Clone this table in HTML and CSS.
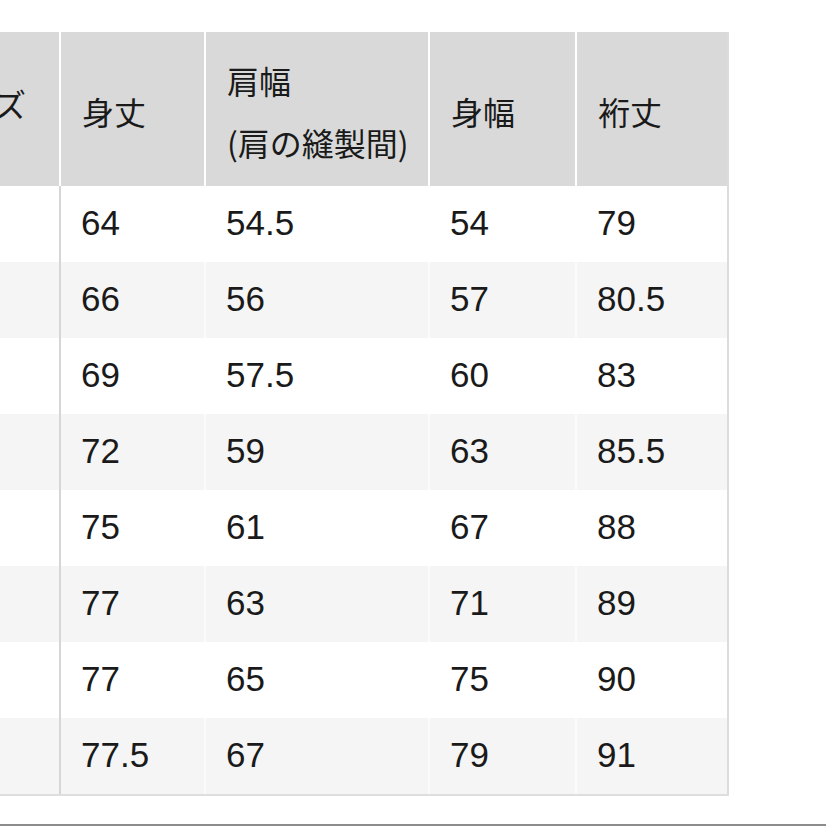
FILE: index.html
```html
<!DOCTYPE html>
<html lang="ja">
<head>
<meta charset="utf-8">
<title>サイズ表</title>
<link rel="stylesheet" href="styles.css">
</head>
<body>
<div class="page">
  <div class="table-clip">
    <table class="size-table">
      <colgroup>
        <col class="c-size">
        <col class="c-len">
        <col class="c-shoulder">
        <col class="c-width">
        <col class="c-sleeve">
      </colgroup>
      <thead>
        <tr>
          <th class="first">サイズ</th>
          <th>身丈</th>
          <th>肩幅<br>(肩の縫製間)</th>
          <th>身幅</th>
          <th class="last">裄丈</th>
        </tr>
      </thead>
      <tbody>
        <tr><td class="first"></td><td>64</td><td>54.5</td><td>54</td><td class="last">79</td></tr>
        <tr><td class="first"></td><td>66</td><td>56</td><td>57</td><td class="last">80.5</td></tr>
        <tr><td class="first"></td><td>69</td><td>57.5</td><td>60</td><td class="last">83</td></tr>
        <tr><td class="first"></td><td>72</td><td>59</td><td>63</td><td class="last">85.5</td></tr>
        <tr><td class="first"></td><td>75</td><td>61</td><td>67</td><td class="last">88</td></tr>
        <tr><td class="first"></td><td>77</td><td>63</td><td>71</td><td class="last">89</td></tr>
        <tr><td class="first"></td><td>77</td><td>65</td><td>75</td><td class="last">90</td></tr>
        <tr><td class="first"></td><td>77.5</td><td>67</td><td>79</td><td class="last">91</td></tr>
      </tbody>
    </table>
  </div>
  <div class="bottom-rule"></div>
</div>
</body>
</html>
```

FILE: styles.css
```css
html, body {
  margin: 0;
  padding: 0;
  background: #ffffff;
}

.page {
  width: 826px;
  height: 826px;
  overflow: hidden;
  display: flex;
  flex-direction: column;
  font-family: "Liberation Sans", "Noto Sans CJK JP", sans-serif;
  color: #1a1a1a;
}

.table-clip {
  padding-top: 32px;
}

.size-table {
  margin-left: -90px;
  border-collapse: separate;
  border-spacing: 0;
  table-layout: fixed;
  width: 819px;
  border-bottom: 2px solid #dedede;
}

.c-size { width: 151px; }
.c-len { width: 145px; }
.c-shoulder { width: 224px; }
.c-width { width: 147px; }
.c-sleeve { width: 152px; }

.size-table th {
  height: 154px;
  box-sizing: border-box;
  padding: 4px 0 0 21px;
  background: #d9d9d9;
  border-right: 2px solid #ffffff;
  text-align: left;
  vertical-align: middle;
  font-family: "Noto Sans CJK JP", sans-serif;
  font-weight: 400;
  font-size: 32px;
  line-height: 62px;
  white-space: nowrap;
}

.size-table th.first {
  padding: 0 0 12px 21px;
}

.size-table th.last {
  border-right: 2px solid #dcdcdc;
}

.size-table td {
  height: 76px;
  box-sizing: border-box;
  padding: 0 0 2px 20px;
  border-right: 2px solid rgba(255, 255, 255, 0.6);
  font-size: 35px;
  line-height: 40px;
  vertical-align: middle;
}

.size-table td.first {
  border-right: 2px solid #d6d6d6;
}

.size-table td.last {
  border-right: 2px solid #dcdcdc;
}

.size-table tbody tr:nth-child(odd) td {
  background: #ffffff;
}

.size-table tbody tr:nth-child(even) td {
  background: #f5f5f5;
}

.bottom-rule {
  margin-top: auto;
  height: 2px;
  background: #8c8c8c;
}
```
